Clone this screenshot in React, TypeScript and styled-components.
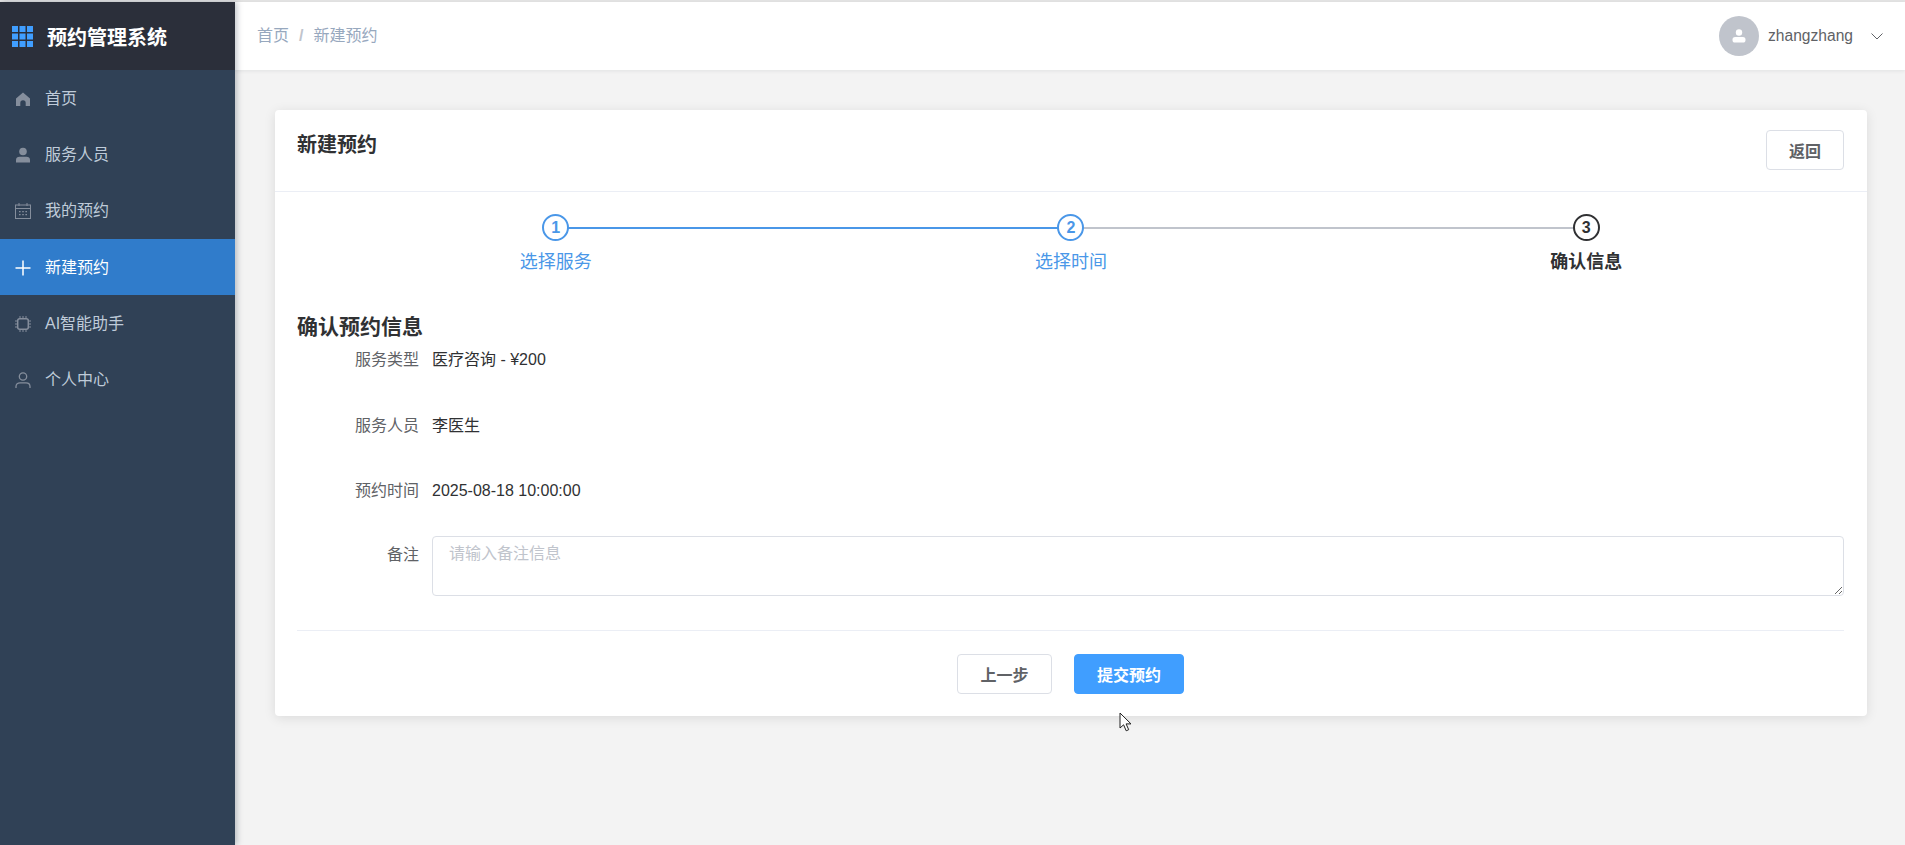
import React from "react";
import styled, { createGlobalStyle } from "styled-components";

const Global = createGlobalStyle`
  * { box-sizing: border-box; }
  html, body { margin: 0; height: 100%; overflow: hidden; }
  body { background: #f3f3f3; font-family: "Liberation Sans", "Noto Sans CJK SC", sans-serif; color: #303133; }
  #root { height: 100%; }
`;

const Shell = styled.div`
  height: 845px;
  display: flex;
  flex-direction: column;
  position: relative;
`;
const TopStrip = styled.div`
  height: 2px;
  background: #e4e4e4;
  flex: none;
`;
const Body = styled.div`
  flex: 1;
  display: flex;
  min-height: 0;
`;
const Sidebar = styled.aside`
  width: 235px;
  flex: none;
  background: #304156;
  box-shadow: 2px 0 6px rgba(0, 21, 41, 0.25);
  position: relative;
  z-index: 2;
`;
const Brand = styled.div`
  height: 68px;
  background: #2b2f3a;
  display: flex;
  align-items: center;
  padding-left: 12px;
  gap: 14px;
  color: #fff;
  font-size: 20px;
  font-weight: 700;
`;
const MenuItem = styled.div<{ $active?: boolean }>`
  height: 56.2px;
  display: flex;
  align-items: center;
  padding-left: 15px;
  padding-top: 2px;
  gap: 14px;
  font-size: 16px;
  line-height: 24px;
  color: ${(p) => (p.$active ? "#ffffff" : "#bfcbd9")};
  background: ${(p) => (p.$active ? "#307ccb" : "transparent")};
  svg { color: ${(p) => (p.$active ? "#ffffff" : "#858e9c")}; flex: none; }
`;
const Main = styled.main`
  flex: 1;
  min-width: 0;
  display: flex;
  flex-direction: column;
`;
const Header = styled.header`
  height: 68px;
  flex: none;
  background: #fff;
  box-shadow: 0 1px 4px rgba(0, 21, 41, 0.08);
  display: flex;
  align-items: center;
  justify-content: space-between;
  padding: 0 22px;
`;
const Crumbs = styled.div`
  display: flex;
  align-items: center;
  gap: 10px;
  font-size: 16px;
  line-height: 24px;
  color: #97a8be;
`;
const Sep = styled.span`
  color: #c0c4cc;
  font-weight: 700;
`;
const User = styled.div`
  display: flex;
  align-items: center;
  color: #606266;
  font-size: 15.6px;
`;
const Avatar = styled.div`
  width: 40px;
  height: 40px;
  border-radius: 50%;
  background: #c0c4cc;
  display: flex;
  align-items: center;
  justify-content: center;
  margin-right: 9px;
`;
const Chevron = styled.svg`
  margin-left: 18px;
`;
const Content = styled.div`
  padding: 40px 38px 40px 40px;
`;
const Card = styled.section`
  background: #fff;
  border-radius: 4px;
  box-shadow: 0 2px 12px rgba(0, 0, 0, 0.1);
`;
const CardHead = styled.div`
  height: 82px;
  border-bottom: 1px solid #ebeef5;
  display: flex;
  justify-content: space-between;
  align-items: flex-start;
  padding: 20px 23px 20px 22px;
`;
const CardTitle = styled.h2`
  margin: 1px 0 0;
  font-size: 20px;
  line-height: 28px;
  font-weight: 700;
  color: #303133;
`;
const Button = styled.button<{ $primary?: boolean; $w: number }>`
  width: ${(p) => p.$w}px;
  height: 40px;
  border-radius: 4px;
  font-family: inherit;
  font-size: 16px;
  font-weight: 700;
  padding: 0;
  background: ${(p) => (p.$primary ? "#409eff" : "#fff")};
  color: ${(p) => (p.$primary ? "#fff" : "#606266")};
  border: 1px solid ${(p) => (p.$primary ? "#409eff" : "#dcdfe6")};
`;
const CardBody = styled.div`
  padding: 22px 23px 22px 22px;
`;
const Steps = styled.div`
  display: grid;
  grid-template-columns: repeat(3, 1fr);
  padding-left: 1px;
`;
const Step = styled.div<{ $state: "done" | "current" }>`
  display: flex;
  flex-direction: column;
  align-items: center;
  position: relative;
  color: ${(p) => (p.$state === "done" ? "#4a97e8" : "#303133")};
`;
const StepLine = styled.div<{ $on?: boolean }>`
  position: absolute;
  left: 50%;
  width: 100%;
  top: 13px;
  height: 2px;
  background: ${(p) => (p.$on ? "#4a97e8" : "#c0c4cc")};
`;
const StepDot = styled.div`
  width: 27px;
  height: 27px;
  border-radius: 50%;
  border: 2px solid currentColor;
  background: #fff;
  position: relative;
  z-index: 1;
  display: flex;
  align-items: center;
  justify-content: center;
  font-size: 16px;
  font-weight: 700;
`;
const StepLabel = styled.div<{ $bold?: boolean }>`
  margin-top: 7px;
  font-size: 18px;
  line-height: 28px;
  font-weight: ${(p) => (p.$bold ? 700 : 400)};
`;
const SectionTitle = styled.h3`
  margin: 36px 0 0;
  font-size: 21px;
  line-height: 30px;
  font-weight: 700;
  color: #303133;
`;
const Rows = styled.div`
  margin-top: -14.5px;
`;
const Row = styled.div`
  display: flex;
  align-items: center;
  height: 65.5px;
  font-size: 16px;
  line-height: 24px;
`;
const NoteRow = styled.div`
  display: flex;
  align-items: flex-start;
  margin-top: 11.5px;
  font-size: 16px;
  line-height: 24px;
`;
const Label = styled.div<{ $top?: boolean }>`
  width: 122px;
  flex: none;
  text-align: right;
  color: #606266;
  margin-right: 13px;
  ${(p) => (p.$top ? "padding-top: 7px;" : "")}
`;
const Value = styled.div`
  color: #303133;
`;
const Note = styled.textarea`
  flex: 1;
  height: 60px;
  border: 1px solid #dcdfe6;
  border-radius: 4px;
  padding: 5px 16px;
  font-family: inherit;
  font-size: 16px;
  line-height: 24px;
  outline: none;
  &::placeholder { color: #c0c4cc; }
`;
const Actions = styled.div`
  margin-top: 34px;
  border-top: 1px solid #ebeef5;
  padding-top: 23px;
  display: flex;
  justify-content: center;
  gap: 22px;
`;
const Cursor = styled.svg`
  position: absolute;
  left: 1119px;
  top: 712px;
  z-index: 5;
`;

const Grid = () => (
  <svg width="21" height="21" viewBox="0 0 21 21" fill="#409eff">
    {[0, 1, 2].flatMap((r) =>
      [0, 1, 2].map((c) => <rect key={`${r}-${c}`} x={c * 7.5} y={r * 7.5} width="6" height="6" />)
    )}
  </svg>
);
const Icon = ({ children }: { children: React.ReactNode }) => (
  <svg width="16" height="16" viewBox="0 0 16 16" fill="none" stroke="currentColor" strokeWidth="1">
    {children}
  </svg>
);
const icons: Record<string, React.ReactNode> = {
  home: <path fill="currentColor" stroke="none" d="M8 1.500 15 7.500V15h-4.300v-3a2.700 2.700 0 0 0-5.400 0v3H1V7.500z" />,
  user: (
    <>
      <circle cx="8" cy="4.500" r="3.800" fill="currentColor" stroke="none" />
      <path fill="currentColor" stroke="none" d="M1 15.500v-2.700C1 10.800 2.500 9.700 4.500 9.700h7c2 0 3.500 1.100 3.500 3.100v2.700z" />
    </>
  ),
  calendar: (
    <>
      <rect x="0.5" y="2" width="15" height="13.5" />
      <path d="M.5 5.500h15M4 0v3M12 0v3" />
      <path d="M4 8.700h1.600M7.200 8.700h1.600M10.400 8.700H12M4 11.700h1.600M7.200 11.700h1.600M10.400 11.700H12" strokeWidth="1.2" />
    </>
  ),
  plus: <path d="M8 .5v15M.5 8h15" strokeWidth="1.5" />,
  cpu: (
    <>
      <rect x="2.7" y="2.7" width="10.6" height="10.6" rx="2" strokeWidth="1.5" />
      <path d="M5 0v2M8 0v2M11 0v2M5 14v2M8 14v2M11 14v2M0 5h2M0 8h2M0 11h2M14 5h2M14 8h2M14 11h2" />
    </>
  ),
  person: (
    <>
      <circle cx="8" cy="4.500" r="3.700" strokeWidth="1.3" />
      <path d="M1 16v-1.500c0-2.200 1.800-3.700 4-3.700h6c2.200 0 4 1.500 4 3.700V16" strokeWidth="1.3" />
    </>
  ),
};
const menu: [string, string][] = [
  ["home", "首页"],
  ["user", "服务人员"],
  ["calendar", "我的预约"],
  ["plus", "新建预约"],
  ["cpu", "AI智能助手"],
  ["person", "个人中心"],
];

export default function App() {
  return (
    <Shell>
      <Global />
      <TopStrip />
      <Body>
        <Sidebar>
          <Brand>
            <Grid />
            预约管理系统
          </Brand>
          {menu.map(([ic, text], i) => (
            <MenuItem key={text} $active={i === 3}>
              <Icon>{icons[ic]}</Icon>
              {text}
            </MenuItem>
          ))}
        </Sidebar>
        <Main>
          <Header>
            <Crumbs>
              <span>首页</span>
              <Sep>/</Sep>
              <span>新建预约</span>
            </Crumbs>
            <User>
              <Avatar>
                <svg width="14" height="14" viewBox="0 0 14 14" fill="#fff">
                  <circle cx="7" cy="3.5" r="3.2" />
                  <rect x="0.5" y="8" width="13" height="5.5" rx="2.6" />
                </svg>
              </Avatar>
              zhangzhang
              <Chevron width="12" height="7" viewBox="0 0 12 7" fill="none" stroke="#606266" strokeWidth="1">
                <path d="M.5.5 6 6 11.500.5" />
              </Chevron>
            </User>
          </Header>
          <Content>
            <Card>
              <CardHead>
                <CardTitle>新建预约</CardTitle>
                <Button $w={78}>返回</Button>
              </CardHead>
              <CardBody>
                <Steps>
                  <Step $state="done">
                    <StepLine $on />
                    <StepDot>1</StepDot>
                    <StepLabel>选择服务</StepLabel>
                  </Step>
                  <Step $state="done">
                    <StepLine />
                    <StepDot>2</StepDot>
                    <StepLabel>选择时间</StepLabel>
                  </Step>
                  <Step $state="current">
                    <StepDot>3</StepDot>
                    <StepLabel $bold>确认信息</StepLabel>
                  </Step>
                </Steps>
                <SectionTitle>确认预约信息</SectionTitle>
                <Rows>
                  <Row>
                    <Label>服务类型</Label>
                    <Value>医疗咨询 - ¥200</Value>
                  </Row>
                  <Row>
                    <Label>服务人员</Label>
                    <Value>李医生</Value>
                  </Row>
                  <Row>
                    <Label>预约时间</Label>
                    <Value>2025-08-18 10:00:00</Value>
                  </Row>
                  <NoteRow>
                    <Label $top>备注</Label>
                    <Note placeholder="请输入备注信息" />
                  </NoteRow>
                </Rows>
                <Actions>
                  <Button $w={95}>上一步</Button>
                  <Button $w={110} $primary>提交预约</Button>
                </Actions>
              </CardBody>
            </Card>
          </Content>
        </Main>
      </Body>
      <Cursor width="14" height="20" viewBox="0 0 14 20">
        <path d="M1 1v15l3.600-3.200 2.600 6 2.500-1.100-2.600-5.800H12z" fill="#fff" stroke="#222" strokeWidth="1" />
      </Cursor>
    </Shell>
  );
}
